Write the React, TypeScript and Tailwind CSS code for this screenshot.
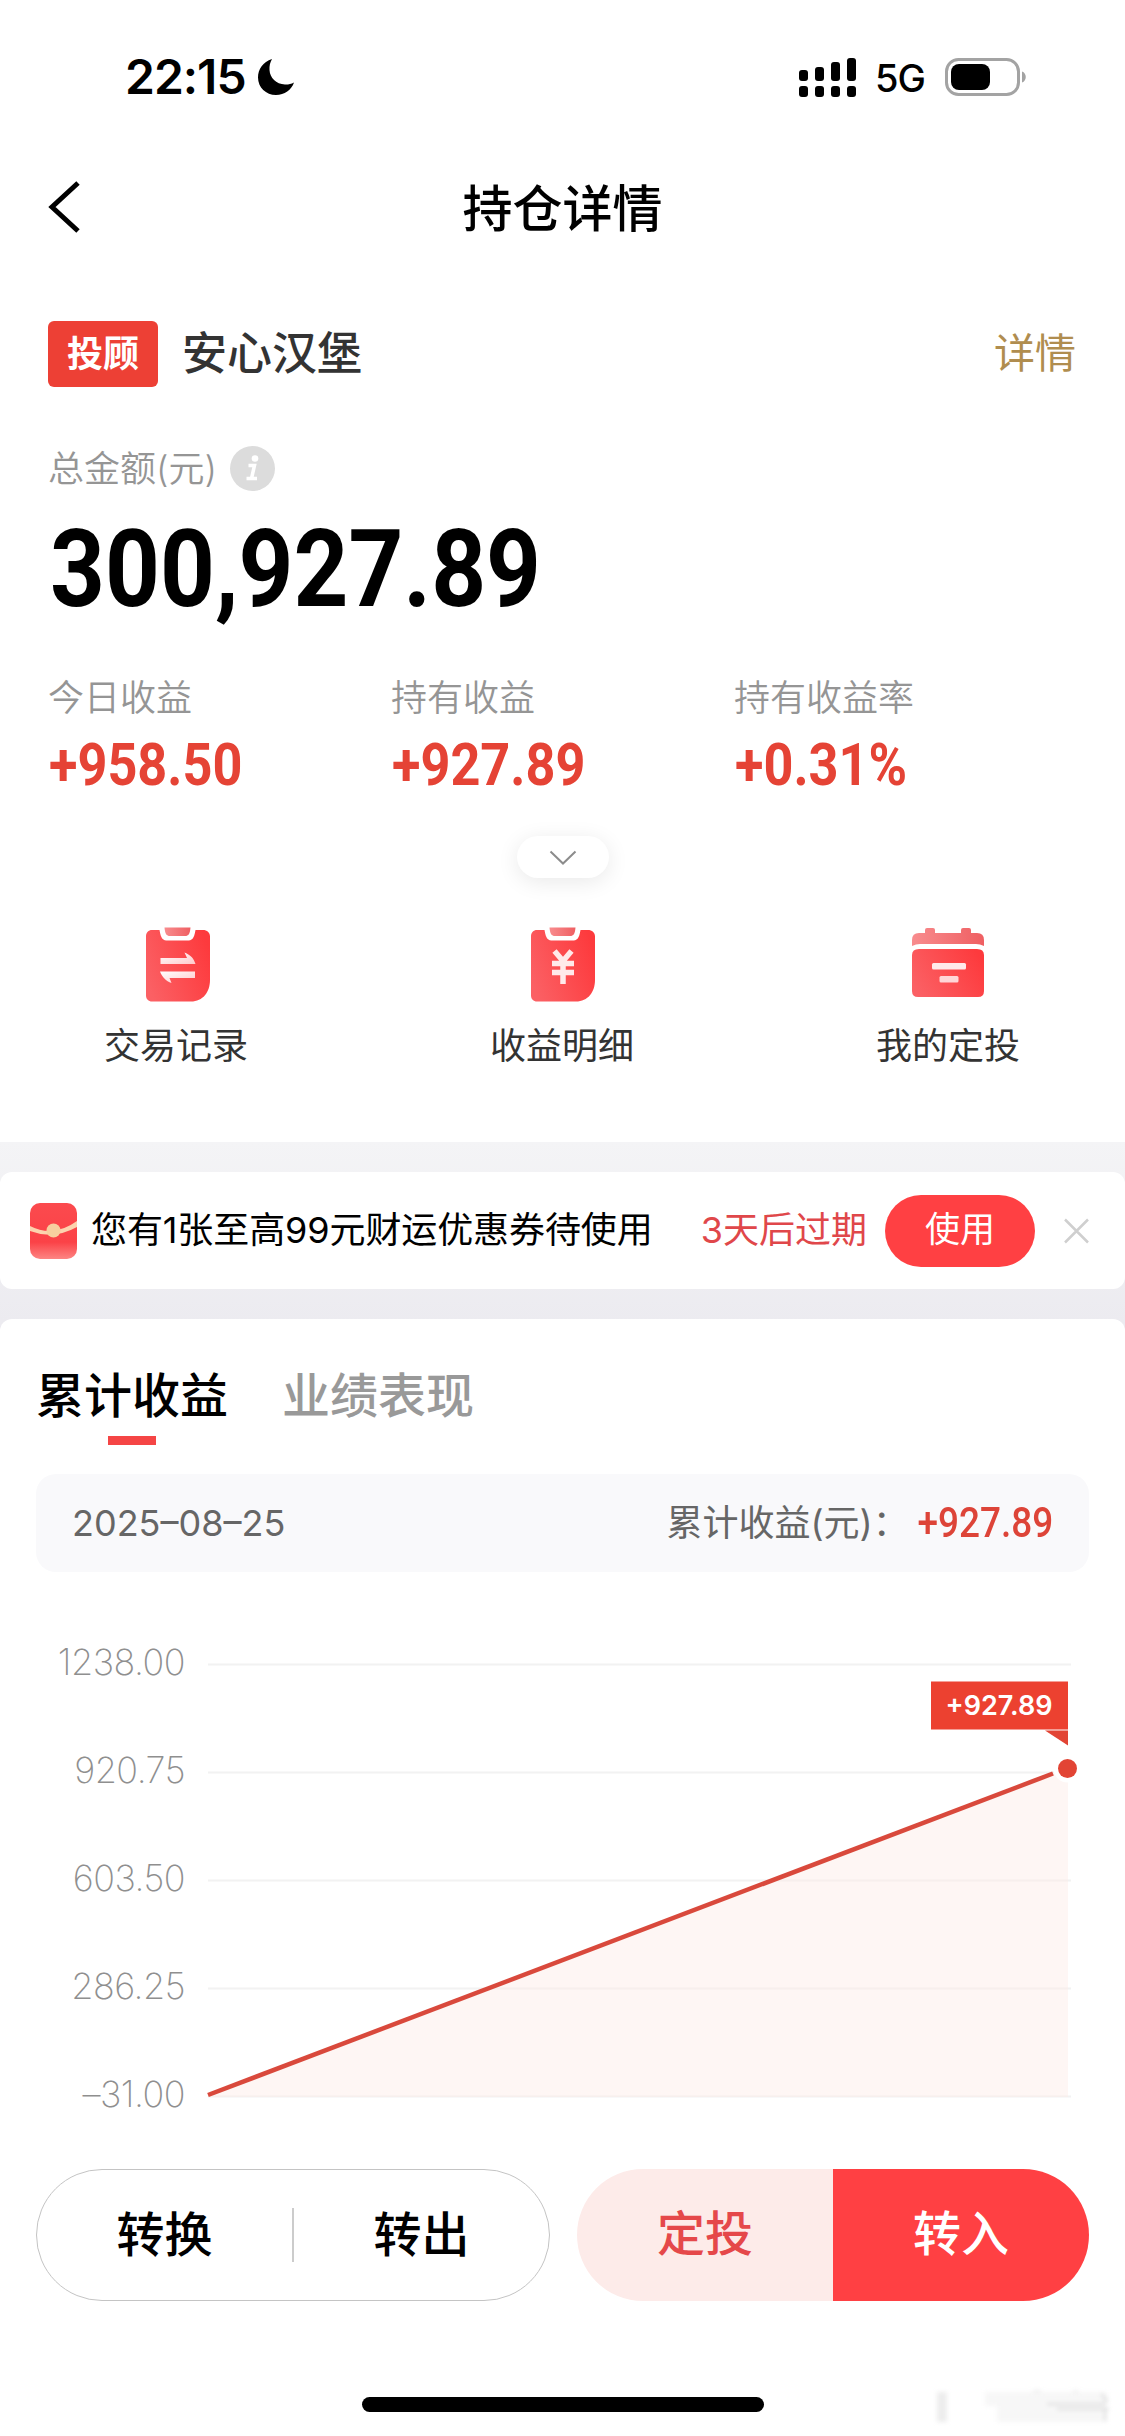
import type { ReactNode } from "react";

interface IStat {
  label: string;
  value: string;
}

interface IShortcut {
  label: string;
  icon: ReactNode;
}

const stats: IStat[] = [
  { label: "今日收益", value: "+958.50" },
  { label: "持有收益", value: "+927.89" },
  { label: "持有收益率", value: "+0.31%" },
];

const axis = [
  { label: "1238.00", y: 92 },
  { label: "920.75", y: 200 },
  { label: "603.50", y: 308 },
  { label: "286.25", y: 416 },
  { label: "–31.00", y: 524 },
];

const signalBars = [11, 14, 19, 23];

function StatusBar() {
  return (
    <div className="flex h-[154px] items-center justify-between pl-[125px] pr-[98px]">
      <div className="flex items-center gap-[12px]">
        <span className="text-[48px] font-semibold leading-[48px] tracking-[-1px]">22:15</span>
        <svg className="h-9 w-9" viewBox="0 0 36 36">
          <path
            d="M14 0C5 3 0 10 0 18.500C0 28.500 8 36 18 36C26.500 36 33.500 31 36 23.500C33 25 30 25.700 27 25.500C18 25 12 19 11.500 11C11.300 7 12 3.500 14 0Z"
            fill="#000"
          />
        </svg>
      </div>
      <div className="flex items-center">
        <div className="flex gap-[7px]">
          {signalBars.map((height) => (
            <div key={height} className="flex h-[39px] flex-col justify-end gap-[5px]">
              <div className="w-[9px] rounded-[3px] bg-black" style={{ height }} />
              <div className="h-[11px] w-[9px] rounded-[3px] bg-black" />
            </div>
          ))}
        </div>
        <span className="ml-[19px] pt-[2px] text-[38px] font-medium leading-[38px] tracking-[-1px]">5G</span>
        <svg className="ml-[20px] h-[38px] w-[82px]" viewBox="0 0 82 38">
          <rect x="1.500" y="1.500" width="72" height="35" rx="12" fill="none" stroke="#a3a3a3" strokeWidth="3" />
          <rect x="6" y="6" width="39" height="26" rx="8" fill="#000" />
          <path d="M77 13.500C82 15 82 23 77 24.500Z" fill="#a3a3a3" />
        </svg>
      </div>
    </div>
  );
}

function NavBar() {
  return (
    <div className="flex h-[108px] items-center justify-between px-[47px]">
      <svg className="h-[54px] w-[34px]" viewBox="0 0 34 54">
        <path d="M31 2L5 26L31 50" fill="none" stroke="#000" strokeWidth="5" />
      </svg>
      <h1 className="pt-[2px] text-[50px] font-medium leading-[60px]">持仓详情</h1>
      <div className="w-[34px]" />
    </div>
  );
}

function IconGradients() {
  return (
    <defs>
      <linearGradient id="panel" x1="0" y1="0.700" x2="1" y2="0.300">
        <stop offset="0" stopColor="#fb6064" />
        <stop offset="1" stopColor="#fd3a3d" />
      </linearGradient>
      <linearGradient id="soft" x1="0" y1="0" x2="1" y2="0">
        <stop offset="0" stopColor="#f88c8e" />
        <stop offset="1" stopColor="#ef5f62" />
      </linearGradient>
      <linearGradient id="mark" x1="0" y1="0" x2="1" y2="1">
        <stop offset="0" stopColor="#ffffff" />
        <stop offset="1" stopColor="#ffc9cb" />
      </linearGradient>
    </defs>
  );
}

function Clipboard({ children }: { children: ReactNode }) {
  return (
    <svg className="ml-[3px] h-[76px] w-[64px]" viewBox="0 0 64 76">
      <IconGradients />
      <path
        d="M6 4H13.500C15 13 17 14.500 22 14.500H41C46 14.500 48 13 49.500 4H57C61 4 64 6.500 64 10.500V54C64 66 57 75.500 45 75.500H6C2.500 75.500 0 73 0 69.500V10.500C0 6.500 2.500 4 6 4Z"
        fill="url(#panel)"
      />
      <path d="M18.500 1.500H44.500C44 8 42.500 10 39 10H24C20.500 10 19 8 18.500 1.500Z" fill="url(#soft)" />
      {children}
    </svg>
  );
}

const shortcuts: IShortcut[] = [
  {
    label: "交易记录",
    icon: (
      <Clipboard>
        <path d="M14.500 32H41L38.500 26.500C45 29 48 33 49.500 38H14.500Z" fill="url(#mark)" />
        <path d="M49 45.500H14C16 51 20 55 25.500 57L23.500 52H49Z" fill="url(#mark)" />
      </Clipboard>
    ),
  },
  {
    label: "收益明细",
    icon: (
      <Clipboard>
        <path
          d="M23.500 25L32 35L40.500 25M21 37.500H43M21 46.500H43M32 35V58"
          fill="none"
          stroke="#ffe9ea"
          strokeWidth="5.500"
        />
      </Clipboard>
    ),
  },
  {
    label: "我的定投",
    icon: (
      <svg className="h-[76px] w-[72px]" viewBox="0 0 72 76">
        <path
          d="M7 7H13V4Q13 2 15 2H21Q23 2 23 4V7H49V4Q49 2 51 2H57Q59 2 59 4V7H65Q72 7 72 14V20Q68 18 64 18H8Q4 18 0 20V14Q0 7 7 7Z"
          fill="url(#soft)"
        />
        <path d="M7 23H65Q72 23 72 29V65Q72 71 66 71H6Q0 71 0 65V29Q0 23 7 23Z" fill="url(#panel)" />
        <rect x="20" y="37" width="34" height="6.500" rx="1.500" fill="#ffeaeb" />
        <rect x="27.500" y="50" width="19" height="6.500" rx="1.500" fill="#ffd6d7" />
      </svg>
    ),
  },
];

function Summary() {
  return (
    <section className="flex flex-col pb-[74px] pt-[59px]">
      <div className="flex h-[66px] items-center pl-12 pr-[49px]">
        <span className="flex h-[66px] w-[110px] items-center justify-center rounded-md bg-[#ed4035] text-[36px] font-bold leading-[44px] text-white">
          投顾
        </span>
        <span className="ml-[24px] text-[45px] font-medium leading-[54px] text-[#333]">安心汉堡</span>
        <span className="ml-auto pb-[3px] text-[41px] leading-[50px] text-[#b08d4f]">详情</span>
      </div>

      <div className="mt-[59px] flex h-[45px] items-center pl-12">
        <span className="text-[36px] font-[350] leading-[44px] text-[#959595]">总金额(元)</span>
        <svg className="ml-[13px] h-[45px] w-[45px]" viewBox="0 0 45 45">
          <circle cx="22.500" cy="22.500" r="22.500" fill="#dcdcdc" />
          <circle cx="25" cy="12.500" r="3.300" fill="#fff" />
          <path d="M18.500 19.500H24.500L21.500 32.500M16.500 32.500H27" fill="none" stroke="#fff" strokeWidth="3.500" />
        </svg>
      </div>

      <div className="mt-[23px] flex h-[110px] items-center pl-[50px]">
        <span className="origin-left scale-x-[0.887] font-['Roboto',sans-serif] text-[108px] font-bold leading-[110px]">
          300,927.89
        </span>
      </div>

      <div className="mt-[52px] grid grid-cols-[343px_343px_1fr] pl-12">
        {stats.map((stat) => (
          <div key={stat.label} className="flex flex-col items-start">
            <span className="text-[36px] font-[350] leading-[44px] text-[#959595]">{stat.label}</span>
            <span className="ml-[1px] mt-[15px] origin-left scale-x-[0.87] font-['Roboto',sans-serif] text-[60px] font-bold leading-[60px] text-[#e54335]">
              {stat.value}
            </span>
          </div>
        ))}
      </div>

      <div className="mx-auto mt-[41px] flex h-[42px] w-[92px] items-center justify-center rounded-full bg-white shadow-[0_4px_22px_rgba(0,0,0,0.09)]">
        <svg className="h-[15px] w-[28px]" viewBox="0 0 28 15">
          <path d="M1.500 1.500L14 13.500L26.500 1.500" fill="none" stroke="#8c8c8c" strokeWidth="2" />
        </svg>
      </div>

      <div className="mt-12 flex justify-between pl-[104px] pr-[105px]">
        {shortcuts.map((shortcut) => (
          <div key={shortcut.label} className="flex flex-col items-center">
            {shortcut.icon}
            <span className="mt-[22px] text-[36px] leading-[44px] text-[#333]">{shortcut.label}</span>
          </div>
        ))}
      </div>
    </section>
  );
}

function CouponBanner() {
  return (
    <div className="flex h-[117px] items-center rounded-[12px] bg-white pl-[30px] pr-[36px]">
      <svg className="h-[56px] w-[47px]" viewBox="0 0 47 56">
        <defs>
          <linearGradient id="packet" x1="0" y1="0" x2="0" y2="1">
            <stop offset="0" stopColor="#fb4a4e" />
            <stop offset="0.700" stopColor="#fb4247" />
            <stop offset="1" stopColor="#fd8583" />
          </linearGradient>
        </defs>
        <rect width="47" height="56" rx="10" fill="url(#packet)" />
        <path d="M0 23Q23.500 35 47 18V24Q23.500 37 0 28Z" fill="#fcd3ae" />
        <circle cx="23.500" cy="27.500" r="7" fill="#f7cf9f" />
      </svg>
      <span className="ml-[14px] pb-[2px] text-[36px] leading-[42px] tracking-[-0.100px] text-black">
        您有1张至高99元财运优惠券待使用
      </span>
      <span className="ml-auto pb-[2px] text-[36px] leading-[42px] text-[#e0474a]">3天后过期</span>
      <button className="ml-[18px] flex h-[72px] w-[150px] items-center justify-center rounded-full bg-[#ff4043] pb-[3px] text-[35px] leading-[42px] text-white">
        使用
      </button>
      <svg className="ml-[29px] h-[26px] w-[25px]" viewBox="0 0 25 26">
        <path d="M1 1.500L24 24.500M24 1.500L1 24.500" stroke="#cfcfcf" strokeWidth="2.500" />
      </svg>
    </div>
  );
}

function Chart() {
  return (
    <svg className="block h-[597px] w-[1125px]" viewBox="0 0 1125 597">
      {axis.map((tick) => (
        <line key={tick.label} x1="208" x2="1071" y1={tick.y + 0.5} y2={tick.y + 0.5} stroke="#f2f2f2" strokeWidth="2" />
      ))}
      <path d="M208 522L1068 196V525H208Z" fill="#fdeae6" fillOpacity="0.450" />
      {axis.map((tick) => (
        <text
          key={tick.label}
          x="185"
          y={tick.y + 11}
          textAnchor="end"
          fill="#8f8f8f"
          className="text-[36px] font-[250] tracking-[-0.500px]"
        >
          {tick.label}
        </text>
      ))}
      <path d="M208 523L1053 201.500" stroke="#d9493c" strokeWidth="4.500" />
      <circle cx="1067.500" cy="196.500" r="14" fill="#fff" />
      <circle cx="1067.500" cy="196.500" r="9.500" fill="#e24434" />
      <rect x="931" y="109.500" width="137" height="48" fill="#ec4130" />
      <path d="M1045 158.500H1068V173.500Z" fill="#e24434" />
      <text x="999" y="143" textAnchor="middle" fill="#fff" className="text-[27px] font-semibold">
        +927.89
      </text>
    </svg>
  );
}

function ProfitCard() {
  return (
    <section className="rounded-t-[12px] bg-white pt-[47px]">
      <div className="flex gap-[54px] pl-[36px] text-[48px] font-medium leading-[60px]">
        <div className="flex flex-col items-center">
          <span className="text-black">累计收益</span>
          <span className="mt-[10px] h-[9px] w-12 bg-[#f54545]" />
        </div>
        <span className="text-[#999]">业绩表现</span>
      </div>
      <div className="mx-9 mt-[29px] flex h-[98px] items-center rounded-[20px] bg-[#f9f9fb] px-9 text-[36px] leading-[44px] text-[#666]">
        <span>2025–08–25</span>
        <span className="ml-auto">累计收益(元)：</span>
        <span className="-ml-[10px] origin-right scale-x-[0.88] font-['Roboto',sans-serif] text-[42px] font-medium text-[#dd4438]">
          +927.89
        </span>
      </div>
      <Chart />
    </section>
  );
}

function ActionBar() {
  return (
    <div className="flex h-[132px] justify-between px-9 text-[48px] font-medium leading-[58px]">
      <div className="flex w-[514px] items-center rounded-full border border-[#c4c4c4] pb-[1px]">
        <button className="flex-1">转换</button>
        <div className="h-[54px] w-[2px] bg-[#ccc]" />
        <button className="flex-1">转出</button>
      </div>
      <div className="flex w-[512px] overflow-hidden rounded-full">
        <button className="flex-1 bg-[#fdebe9] pb-[2px] text-[#e5484a]">定投</button>
        <button className="flex-1 bg-[#ff4043] pb-[2px] text-white">转入</button>
      </div>
    </div>
  );
}

export default function App() {
  return (
    <div
      lang="zh-CN"
      className="relative h-[2436px] w-[1125px] overflow-hidden bg-white font-['Inter','Noto_Sans_CJK_SC',sans-serif] text-black"
    >
      <StatusBar />
      <NavBar />
      <Summary />
      <div className="flex flex-col gap-[30px] bg-linear-to-b from-[#f4f4f6] to-[#ecebf0] to-[180px] pt-[30px]">
        <CouponBanner />
        <ProfitCard />
      </div>
      <ActionBar />
      <div className="mx-auto mt-24 h-[15px] w-[402px] rounded-full bg-black" />

      {/* faded stamp in the corner */}
      <svg className="absolute bottom-[10px] right-[8px] h-[40px] w-[190px] blur-[2px]" viewBox="0 0 190 40">
        <path d="M10 6H20V36H10ZM106 4H114V36H106ZM146 4H151V36H146Z" fill="#ededed" />
        <path d="M58 6H180V36H70V20H58Z" fill="#f7f7f7" />
        <path d="M120 18H176M130 23H182M174 8L180 14L176 19M178 24V35" fill="none" stroke="#dcdcdc" strokeWidth="2" />
      </svg>
    </div>
  );
}
